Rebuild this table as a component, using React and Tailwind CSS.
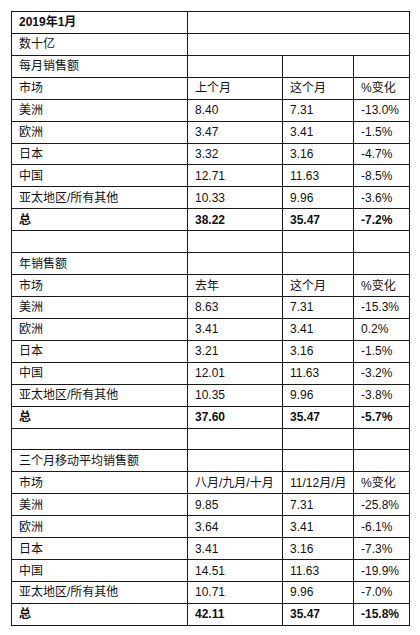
const sections = [
  {
    title: "每月销售额",
    head: ["市场", "上个月", "这个月", "%变化"],
    rows: [
      ["美洲", "8.40", "7.31", "-13.0%"],
      ["欧洲", "3.47", "3.41", "-1.5%"],
      ["日本", "3.32", "3.16", "-4.7%"],
      ["中国", "12.71", "11.63", "-8.5%"],
      ["亚太地区/所有其他", "10.33", "9.96", "-3.6%"],
    ],
    total: ["总", "38.22", "35.47", "-7.2%"],
  },
  {
    title: "年销售额",
    head: ["市场", "去年", "这个月", "%变化"],
    rows: [
      ["美洲", "8.63", "7.31", "-15.3%"],
      ["欧洲", "3.41", "3.41", "0.2%"],
      ["日本", "3.21", "3.16", "-1.5%"],
      ["中国", "12.01", "11.63", "-3.2%"],
      ["亚太地区/所有其他", "10.35", "9.96", "-3.8%"],
    ],
    total: ["总", "37.60", "35.47", "-5.7%"],
  },
  {
    title: "三个月移动平均销售额",
    head: ["市场", "八月/九月/十月", "11/12月/月", "%变化"],
    rows: [
      ["美洲", "9.85", "7.31", "-25.8%"],
      ["欧洲", "3.64", "3.41", "-6.1%"],
      ["日本", "3.41", "3.16", "-7.3%"],
      ["中国", "14.51", "11.63", "-19.9%"],
      ["亚太地区/所有其他", "10.71", "9.96", "-7.0%"],
    ],
    total: ["总", "42.11", "35.47", "-15.8%"],
  },
];

const cell = "border border-[#1a1a1a] pl-[7px] pr-0 py-0 whitespace-nowrap overflow-hidden";

const Row = ({ cells, bold }) => (
  <tr className="h-[21.93px]">
    {cells.map((c, i) => (
      <td key={i} className={`${cell} ${bold ? "font-bold" : ""}`}>
        {c}
      </td>
    ))}
  </tr>
);

const Section = ({ section, first }) => (
  <>
    {!first && <Row cells={["", "", "", ""]} />}
    {first && (
      <>
        <tr className="h-[21.93px]">
          <td className={`${cell} font-bold`}>2019年1月</td>
          <td className={cell} colSpan={3}></td>
        </tr>
        <tr className="h-[21.93px]">
          <td className={cell}>数十亿</td>
          <td className={cell} colSpan={3}></td>
        </tr>
      </>
    )}
    <Row cells={[section.title, "", "", ""]} />
    <Row cells={section.head} />
    {section.rows.map((r) => (
      <Row key={r[0]} cells={r} />
    ))}
    <Row cells={section.total} bold />
  </>
);

export default function App() {
  return (
    <div className="w-[420px] h-[635px] bg-white pt-[11px] pl-[11px]">
      <table
        className="w-[398px] border-collapse table-fixed text-[12px] leading-none text-[#111]"
        style={{ fontFamily: '"Liberation Sans", "Noto Sans CJK SC", sans-serif' }}
      >
        <colgroup>
          <col className="w-[176px]" />
          <col className="w-[95px]" />
          <col className="w-[71px]" />
          <col className="w-[56px]" />
        </colgroup>
        <tbody>
          {sections.map((s, i) => (
            <Section key={s.title} section={s} first={i === 0} />
          ))}
        </tbody>
      </table>
    </div>
  );
}
